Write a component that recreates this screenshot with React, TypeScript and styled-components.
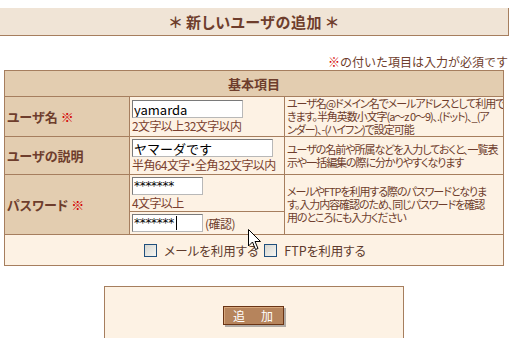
import React from 'react';
import styled, { createGlobalStyle } from 'styled-components';

const GlobalStyle = createGlobalStyle`
    body {
        margin: 0;
        background: #ffffff;
        font-family: "Noto Sans CJK JP", "Noto Sans", sans-serif;
        font-feature-settings: "palt" 1;
        color: #6e3d2c;
    }
`;

const Page = styled.div`
    position: relative;
    padding-top: 8px;
    width: 510px;
    height: 330px;
    overflow: hidden;
`;

const TitleBar = styled.h1`
    box-sizing: border-box;
    width: 509px;
    height: 28px;
    margin: 0;
    background: #f0e4d6;
    border-right: 1px solid #a67e5e;
    border-bottom: 1px solid #a67e5e;
    font-size: 15px;
    font-weight: bold;
    line-height: 27px;
    text-align: center;
    color: #6e3d2c;
    letter-spacing: 0.5px;
`;

const Note = styled.p`
    width: 508px;
    height: 16px;
    margin: 18px 0 0;
    font-size: 12px;
    line-height: 16px;
    text-align: right;
    font-feature-settings: normal;
`;

const Req = styled.span`
    color: #d40000;
    font-weight: bold;
`;

const FormTable = styled.table`
    margin-left: 4px;
    width: 500px;
    border-collapse: collapse;
    table-layout: fixed;
    border: 1px solid #a67e5e;

    td,
    th {
        border: 1px solid #a67e5e;
        padding: 0;
    }
`;

const Row = styled.tr<{ $h: number }>`
    height: ${(p) => p.$h}px;
`;

const HeadCell = styled.th`
    background: #e3cdb0;
    font-size: 13px;
    font-weight: bold;
    color: #6e3d2c;
`;

const LabelCell = styled.td`
    background: #e3cdb0;
    padding-left: 2px !important;
    font-size: 13px;
    font-weight: bold;
    color: #6e3d2c;
    white-space: nowrap;
`;

const InputCell = styled.td`
    background: #fdf2e4;
    padding: 0 0 0 2px !important;
    vertical-align: middle;
    overflow: visible;
`;

const DescCell = styled.td`
    background: #fdf2e4;
    padding-left: 2px !important;
    font-size: 11px;
    line-height: 13px;
    letter-spacing: -1.05px;
    white-space: nowrap;
    overflow: hidden;
`;

const TextBox = styled.input<{ $w: number }>`
    display: block;
    box-sizing: border-box;
    width: ${(p) => p.$w}px;
    height: 18px;
    margin: 0;
    padding: 0 1px;
    border: 1px solid #7a7a7a;
    border-right-color: #b8b8b8;
    border-bottom-color: #b8b8b8;
    background: #ffffff;
    font-family: "Noto Sans CJK JP", sans-serif;
    font-size: 13px;
    color: #000000;
    outline: none;
`;

const PwBox = styled(TextBox)`
    font-family: "DejaVu Sans", sans-serif;
    font-size: 12px;
    letter-spacing: -0.3px;
`;

const InlineRow = styled.div`
    display: flex;
    align-items: center;
    gap: 2px;
    font-size: 12px;
    letter-spacing: -0.5px;
`;

const Hint = styled.div`
    font-size: 12px;
    line-height: 15px;
    letter-spacing: -0.6px;
    white-space: nowrap;
    color: #7a3f2e;
`;

const CheckRow = styled.td`
    background: #fdf2e4;
    text-align: center;
`;

const CheckGroup = styled.div`
    display: flex;
    justify-content: center;
    align-items: center;
    gap: 6px;
    font-size: 12.5px;
    color: #5e3a2c;
    padding-left: 2px;
`;

const CheckLabel = styled.label`
    display: flex;
    align-items: center;
    gap: 7px;
`;

const Check = styled.input`
    appearance: none;
    width: 13px;
    height: 13px;
    margin: 0;
    border: 1px solid #1f4f7c;
    background: linear-gradient(135deg, #d6d6d0 0%, #f6f6f2 100%);
`;

const ActionBox = styled.div`
    box-sizing: border-box;
    width: 300px;
    height: 70px;
    margin: 20px 0 0 104px;
    padding-top: 19px;
    background: #fdf2e4;
    border: 1px solid #a67e5e;
    display: flex;
    justify-content: center;
    align-items: flex-start;
`;

const SubmitButton = styled.button`
    box-sizing: border-box;
    width: 61px;
    height: 19px;
    margin-left: -2px;
    padding: 0;
    background: #b6845c;
    border: 1px solid #6a3414;
    box-shadow: inset 1px 1px 0 #d7a77c, 2px 2px 0 #b0aaa4;
    color: #ffffff;
    font-family: "Noto Sans CJK JP", sans-serif;
    font-size: 12px;
    line-height: 16px;
    letter-spacing: 2px;
    text-indent: 2px;
`;

const PwWrap = styled.div`
    position: relative;
    width: 71px;
`;

const Caret = styled.span`
    position: absolute;
    left: 44px;
    top: 2px;
    width: 1px;
    height: 14px;
    background: #000;
`;

const Pointer = styled.svg`
    position: absolute;
    left: 248px;
    top: 229px;
`;

export default function App() {
    return (
        <>
            <GlobalStyle />
            <Page>
                <TitleBar>＊ 新しいユーザの追加 ＊</TitleBar>
                <Note>
                    <Req>※</Req>の付いた項目は入力が必須です
                </Note>
                <FormTable>
                    <colgroup>
                        <col style={{ width: 125 }} />
                        <col style={{ width: 155 }} />
                        <col />
                    </colgroup>
                    <tbody>
                        <Row $h={26}>
                            <HeadCell colSpan={3}>基本項目</HeadCell>
                        </Row>
                        <Row $h={40}>
                            <LabelCell>
                                ユーザ名 <Req>※</Req>
                            </LabelCell>
                            <InputCell>
                                <TextBox $w={111} defaultValue="yamarda" />
                                <Hint>2文字以上32文字以内</Hint>
                            </InputCell>
                            <DescCell>
                                ユーザ名@ドメイン名でメールアドレスとして利用で
                                <br />
                                きます。半角英数小文字(a〜z 0〜9)、.(ドット)、_(ア
                                <br />
                                ンダー)、-(ハイフン)で設定可能
                            </DescCell>
                        </Row>
                        <Row $h={38}>
                            <LabelCell>ユーザの説明</LabelCell>
                            <InputCell>
                                <TextBox $w={141} defaultValue="ヤマーダです" />
                                <Hint>半角64文字・全角32文字以内</Hint>
                            </InputCell>
                            <DescCell>
                                ユーザの名前や所属などを入力しておくと、一覧表
                                <br />
                                示や一括編集の際に分かりやすくなります
                            </DescCell>
                        </Row>
                        <Row $h={37}>
                            <LabelCell rowSpan={2}>
                                パスワード <Req>※</Req>
                            </LabelCell>
                            <InputCell>
                                <PwBox $w={71} defaultValue="*******" />
                                <Hint>4文字以上</Hint>
                            </InputCell>
                            <DescCell rowSpan={2}>
                                メールやFTPを利用する際のパスワードとなりま
                                <br />
                                す。入力内容確認のため、同じパスワードを確認
                                <br />
                                用のところにも入力ください
                            </DescCell>
                        </Row>
                        <Row $h={23}>
                            <InputCell>
                                <InlineRow>
                                    <PwWrap>
                                        <PwBox $w={71} defaultValue="*******" />
                                        <Caret />
                                    </PwWrap>
                                    <span>(確認)</span>
                                </InlineRow>
                            </InputCell>
                        </Row>
                        <Row $h={31}>
                            <CheckRow colSpan={3}>
                                <CheckGroup>
                                    <CheckLabel>
                                        <Check type="checkbox" />
                                        メールを利用する
                                    </CheckLabel>
                                    <CheckLabel>
                                        <Check type="checkbox" />
                                        FTPを利用する
                                    </CheckLabel>
                                </CheckGroup>
                            </CheckRow>
                        </Row>
                    </tbody>
                </FormTable>
                <ActionBox>
                    <SubmitButton type="button">追　加</SubmitButton>
                </ActionBox>
                <Pointer width="14" height="22" viewBox="0 0 14 22">
                    <path
                        d="M0.5 0.5 L0.5 17 L4.5 13 L7.5 20.5 L10 19.5 L7 12.5 L12.5 12.5 Z"
                        fill="#ffffff"
                        stroke="#000000"
                        strokeWidth="1"
                        strokeLinejoin="miter"
                    />
                </Pointer>
            </Page>
        </>
    );
}
